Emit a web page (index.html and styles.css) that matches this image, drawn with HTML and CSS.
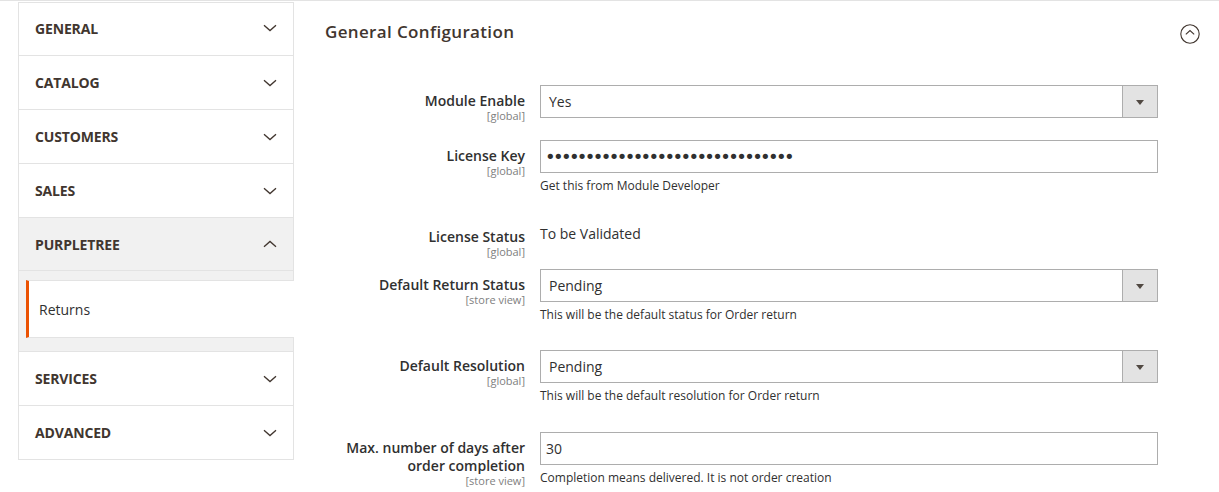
FILE: index.html
```html
<!DOCTYPE html>
<html lang="en">
<head>
<meta charset="utf-8">
<title>Configuration</title>
<link rel="stylesheet" href="styles.css">
</head>
<body>
<div class="topline"></div>
<div class="page">
  <nav class="config-nav">
    <div class="nav-section"><div class="nav-title"><span>General</span><svg class="chev" width="14" height="8" viewBox="0 0 14 8"><path d="M1 1.2 L7 6.6 L13 1.2"/></svg></div></div>
    <div class="nav-section"><div class="nav-title"><span>Catalog</span><svg class="chev" width="14" height="8" viewBox="0 0 14 8"><path d="M1 1.2 L7 6.6 L13 1.2"/></svg></div></div>
    <div class="nav-section"><div class="nav-title"><span>Customers</span><svg class="chev" width="14" height="8" viewBox="0 0 14 8"><path d="M1 1.2 L7 6.6 L13 1.2"/></svg></div></div>
    <div class="nav-section"><div class="nav-title"><span>Sales</span><svg class="chev" width="14" height="8" viewBox="0 0 14 8"><path d="M1 1.2 L7 6.6 L13 1.2"/></svg></div></div>
    <div class="nav-section open">
      <div class="nav-title active"><span>Purpletree</span><svg class="chev" width="14" height="8" viewBox="0 0 14 8"><path d="M1 6.8 L7 1.4 L13 6.8"/></svg></div>
      <div class="nav-items">
        <div class="nav-item current">Returns</div>
      </div>
    </div>
    <div class="nav-section"><div class="nav-title"><span>Services</span><svg class="chev" width="14" height="8" viewBox="0 0 14 8"><path d="M1 1.2 L7 6.6 L13 1.2"/></svg></div></div>
    <div class="nav-section"><div class="nav-title"><span>Advanced</span><svg class="chev" width="14" height="8" viewBox="0 0 14 8"><path d="M1 1.2 L7 6.6 L13 1.2"/></svg></div></div>
  </nav>

  <main class="content">
    <div class="section-head">
      <h2 class="section-title">General Configuration</h2>
      <svg class="collapse-icon" width="20" height="20" viewBox="0 0 20 20"><circle cx="10" cy="10" r="9.2"/><path d="M5.8 10.4 L10 6.6 L14.2 10.4"/></svg>
    </div>

    <div class="form">
      <div class="field">
        <div class="field-label"><div class="label">Module Enable</div><div class="scope">[global]</div></div>
        <div class="control">
          <div class="select"><span class="select-value">Yes</span><span class="select-btn"><span class="tri"></span></span></div>
        </div>
      </div>

      <div class="field">
        <div class="field-label"><div class="label">License Key</div><div class="scope">[global]</div></div>
        <div class="control">
          <div class="input password">•••••••••••••••••••••••••••••••</div>
          <div class="note">Get this from Module Developer</div>
        </div>
      </div>

      <div class="field">
        <div class="field-label"><div class="label">License Status</div><div class="scope">[global]</div></div>
        <div class="control">
          <div class="value">To be Validated</div>
        </div>
      </div>

      <div class="field">
        <div class="field-label"><div class="label">Default Return Status</div><div class="scope">[store view]</div></div>
        <div class="control">
          <div class="select"><span class="select-value">Pending</span><span class="select-btn"><span class="tri"></span></span></div>
          <div class="note">This will be the default status for Order return</div>
        </div>
      </div>

      <div class="field wide-gap">
        <div class="field-label"><div class="label">Default Resolution</div><div class="scope">[global]</div></div>
        <div class="control">
          <div class="select"><span class="select-value">Pending</span><span class="select-btn"><span class="tri"></span></span></div>
          <div class="note">This will be the default resolution for Order return</div>
        </div>
      </div>

      <div class="field">
        <div class="field-label"><div class="label">Max. number of days after order completion</div><div class="scope">[store view]</div></div>
        <div class="control">
          <div class="input">30</div>
          <div class="note">Completion means delivered. It is not order creation</div>
        </div>
      </div>
    </div>
  </main>
</div>
</body>
</html>
```

FILE: styles.css
```css
* { box-sizing: border-box; }

html, body {
  margin: 0;
  padding: 0;
  background: #ffffff;
  font-family: "Open Sans", "Liberation Sans", Arial, sans-serif;
  color: #303030;
}

.topline {
  height: 1px;
  background: #e3e3e3;
}

.page {
  display: flex;
  align-items: flex-start;
  padding-top: 1px;
}

/* ---------- Sidebar ---------- */
.config-nav {
  margin-left: 18px;
  width: 276px;
  flex: none;
  border: 1px solid #e3e3e3;
  border-bottom: none;
}

.nav-section {
  border-bottom: 1px solid #e3e3e3;
}

.nav-section:first-child .nav-title {
  height: 52px;
  padding-bottom: 2px;
}

.nav-title {
  height: 53px;
  display: flex;
  align-items: center;
  justify-content: space-between;
  padding: 0 16px 0 16px;
  font-size: 14px;
  font-weight: 700;
  text-transform: uppercase;
  color: #41362f;
  letter-spacing: -0.15px;
}

.nav-title.active {
  background: #f1f1f1;
  border-bottom: 1px solid #e3e3e3;
}

.chev {
  display: block;
  fill: none;
  stroke: #41362f;
  stroke-width: 1.3;
}

.nav-items {
  background: #f1f1f1;
  padding: 9px 0 13px 0;
}

.nav-item {
  margin-left: 7px;
  margin-right: -1px;
  height: 58px;
  display: flex;
  align-items: center;
  padding-left: 10px;
  font-size: 14px;
  color: #303030;
  background: #ffffff;
  border-top: 1px solid #e3e3e3;
  border-bottom: 1px solid #e3e3e3;
  border-left: 3px solid #eb5202;
}

/* ---------- Content ---------- */
.content {
  flex: 1;
  padding: 0 19px 0 31px;
}

.section-head {
  display: flex;
  justify-content: space-between;
  align-items: flex-start;
  padding-top: 18px;
}

.section-title {
  margin: 0;
  font-size: 17px;
  line-height: 24px;
  font-weight: 600;
  color: #41362f;
  letter-spacing: 0.35px;
}

.collapse-icon {
  display: block;
  margin-top: 4px;
  fill: none;
  stroke: #41362f;
  stroke-width: 1.1;
}

.form {
  margin-top: 41px;
}

.field {
  display: grid;
  grid-template-columns: 200px 618px;
  column-gap: 15px;
  margin-bottom: 22px;
  align-items: start;
}

.field.wide-gap {
  margin-bottom: 23px;
}

.field-label {
  height: 26px;
  padding-top: 7px;
  text-align: right;
}

.label {
  font-size: 14px;
  line-height: 18px;
  font-weight: 600;
  color: #303030;
}

.scope {
  margin-top: -1px;
  font-size: 11px;
  line-height: 13px;
  color: #808080;
}

.select {
  height: 33px;
  display: flex;
  align-items: stretch;
  border: 1px solid #adadad;
  background: #ffffff;
}

.select-value {
  flex: 1;
  display: flex;
  align-items: center;
  padding-left: 8px;
  font-size: 14px;
  color: #303030;
}

.select-btn {
  width: 35px;
  flex: none;
  background: #e3e3e3;
  border-left: 1px solid #adadad;
  display: flex;
  align-items: center;
  justify-content: center;
}

.tri {
  width: 0;
  height: 0;
  border-left: 4px solid transparent;
  border-right: 4px solid transparent;
  border-top: 5px solid #514943;
  margin-top: 1px;
}

.input {
  height: 33px;
  border: 1px solid #adadad;
  display: flex;
  align-items: center;
  padding-left: 5px;
  font-size: 14px;
  color: #303030;
}

.input.password {
  font-family: "DejaVu Sans", sans-serif;
  font-size: 18px;
  letter-spacing: -2.65px;
  padding-left: 4px;
  color: #303030;
}

.value {
  padding: 4px 0;
  font-size: 14px;
  line-height: 18px;
  color: #303030;
}

.note {
  margin-top: 5px;
  margin-bottom: 5px;
  font-size: 12px;
  line-height: 16px;
  color: #303030;
}
```
